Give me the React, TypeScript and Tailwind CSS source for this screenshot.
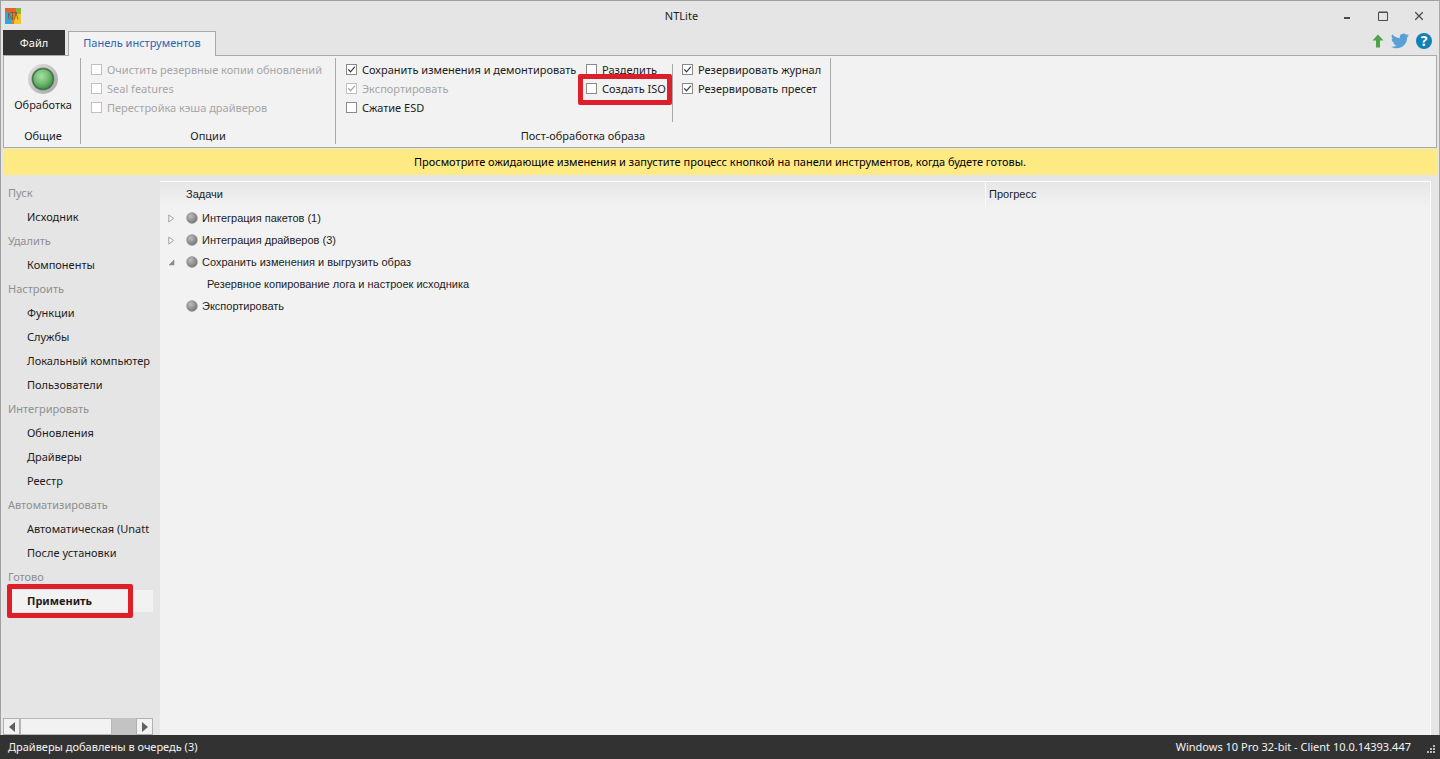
import { useState } from "react";

type CheckProps = {
  id: string;
  label: string;
  checked?: boolean;
  disabled?: boolean;
  marked?: boolean;
};

function Check({ id, label, checked = false, disabled = false, marked = false }: CheckProps) {
  return (
    <div className="relative flex h-[19px] items-center gap-[5px]">
      <span className="grid size-[11px] shrink-0">
        <input
          id={id}
          type="checkbox"
          defaultChecked={checked}
          disabled={disabled}
          className="peer col-start-1 row-start-1 size-[11px] appearance-none border border-[#8a8a8a] bg-white disabled:border-[#c0c0c0]"
        />
        <svg
          viewBox="0 0 11 11"
          fill="none"
          stroke="currentColor"
          strokeWidth="1.3"
          className="pointer-events-none invisible col-start-1 row-start-1 size-[11px] text-[#404040] peer-checked:visible peer-disabled:text-[#a5a5a5]"
        >
          <path d="M2.3 5.4 4.5 7.8 8.8 2.8" />
        </svg>
      </span>
      <label htmlFor={id} className={disabled ? "whitespace-nowrap text-[#a6a6a6]" : "whitespace-nowrap"}>
        {label}
      </label>
      {marked && (
        <span className="pointer-events-none absolute -top-[5px] -right-2 -bottom-[7px] -left-2 rounded-xs border-5 border-[#de1f2a]" />
      )}
    </div>
  );
}

function Logo() {
  return (
    <svg viewBox="0 0 16 16" className="size-4" aria-hidden="true">
      <rect width="11" height="8" fill="#e8602f" />
      <rect x="11" width="5" height="9" fill="#8fb43e" />
      <rect y="5" width="6" height="11" fill="#27a5d8" />
      <rect x="6" y="5" width="5" height="11" fill="#e9772a" />
      <path d="M10 6h6v10H9Z" fill="#f3c62b" />
      <path d="M0 4h3l3 12H0Z" fill="#2aa9e0" />
      <path d="M3.5 5v6M3.5 5l4 7M7.5 5v7M11 4.5l-1.5 7M11 4.5l2 7M5 4.5h7" stroke="#8a5a26" strokeWidth=".9" fill="none" />
    </svg>
  );
}

function Orb() {
  return (
    <svg viewBox="0 0 32 32" className="size-8" aria-hidden="true">
      <defs>
        <linearGradient id="rim" x1="0" y1="0" x2="1" y2="1">
          <stop offset="0" stopColor="#e4e4e4" />
          <stop offset=".5" stopColor="#c2c2c2" />
          <stop offset="1" stopColor="#a6a6a6" />
        </linearGradient>
        <radialGradient id="green" cx=".42" cy=".36" r=".65">
          <stop offset="0" stopColor="#a9dfa5" />
          <stop offset=".55" stopColor="#74bd76" />
          <stop offset="1" stopColor="#45904b" />
        </radialGradient>
      </defs>
      <circle cx="16" cy="16" r="15" fill="url(#rim)" />
      <circle cx="16" cy="16" r="11.5" fill="#7d8f7d" />
      <circle cx="16" cy="16" r="10.8" fill="#3a6e40" />
      <circle cx="16" cy="16" r="9.8" fill="url(#green)" />
    </svg>
  );
}

function Dot() {
  return (
    <svg viewBox="0 0 12 12" className="size-3 shrink-0" aria-hidden="true">
      <defs>
        <radialGradient id="grey" cx=".36" cy=".32" r=".75">
          <stop offset="0" stopColor="#bcbcbc" />
          <stop offset=".6" stopColor="#929292" />
          <stop offset="1" stopColor="#747474" />
        </radialGradient>
      </defs>
      <circle cx="6" cy="6" r="5.7" fill="#909090" />
      <circle cx="6" cy="6" r="5" fill="url(#grey)" />
    </svg>
  );
}

function Divider() {
  return <div className="w-px shrink-0 bg-[#a9a9a9]" />;
}

const sections = [
  { title: "Пуск", items: ["Исходник"] },
  { title: "Удалить", items: ["Компоненты"] },
  { title: "Настроить", items: ["Функции", "Службы", "Локальный компьютер", "Пользователи"] },
  { title: "Интегрировать", items: ["Обновления", "Драйверы", "Реестр"] },
  { title: "Автоматизировать", items: ["Автоматическая (Unatt", "После установки"] },
  { title: "Готово", items: ["Применить"] },
];

type Task = { name: string; state?: "closed" | "open"; child?: boolean };

const tasks: Task[] = [
  { name: "Интеграция пакетов (1)", state: "closed" },
  { name: "Интеграция драйверов (3)", state: "closed" },
  { name: "Сохранить изменения и выгрузить образ", state: "open" },
  { name: "Резервное копирование лога и настроек исходника", child: true },
  { name: "Экспортировать" },
];

function TitleBar() {
  return (
    <header className="flex h-[29px] items-center pr-[15px] pl-1">
      <Logo />
      <h1 className="grow text-center">NTLite</h1>
      <div className="flex items-center justify-end gap-[26px] text-[#4a4a4a]">
        <button aria-label="Свернуть">
          <svg viewBox="0 0 10 10" className="size-[10px]">
            <path d="M2 6h6v2H2z" fill="currentColor" />
          </svg>
        </button>
        <button aria-label="Развернуть">
          <svg viewBox="0 0 10 10" className="size-[10px]" fill="none" stroke="currentColor">
            <path d="M.5 1.5h9v8h-9zM.5 1h9" />
          </svg>
        </button>
        <button aria-label="Закрыть">
          <svg viewBox="0 0 10 10" className="size-[10px]" fill="none" stroke="currentColor" strokeWidth="1.3">
            <path d="M1.3 1.3l7.4 7.4M8.7 1.3 1.3 8.7" />
          </svg>
        </button>
      </div>
    </header>
  );
}

function TabBar() {
  return (
    <div className="flex h-[25px] justify-between">
      <div className="flex gap-[3px]">
        <button className="w-[62px] bg-[#323232] text-white">Файл</button>
        <button className="relative -mb-px mt-px w-[148px] border border-b-0 border-[#a9a9a9] bg-[#f2f2f2] pb-0.5 text-[#2b63b4]">
          Панель инструментов
        </button>
      </div>
      <div className="flex items-center gap-[7px] pr-[5px] pb-1">
        <a href="#update" aria-label="Обновить">
          <svg viewBox="0 0 12 14" className="h-[14px] w-3">
            <path d="M6 .5 11.5 6.5H8V13.5H4V6.5H.5Z" fill="#4fa348" />
          </svg>
        </a>
        <a href="#twitter" aria-label="Twitter">
          <svg viewBox="0 0 24 24" className="size-[18px]">
            <path
              fill="#5a9fd6"
              d="M23.95 4.57a10 10 0 0 1-2.82.77 4.96 4.96 0 0 0 2.16-2.72c-.95.55-2 .95-3.13 1.18a4.92 4.92 0 0 0-8.38 4.48C7.69 8.1 4.07 6.13 1.64 3.16a4.92 4.92 0 0 0 1.52 6.57 4.9 4.9 0 0 1-2.23-.61v.06a4.92 4.92 0 0 0 3.95 4.83 5 5 0 0 1-2.21.08 4.94 4.94 0 0 0 4.6 3.42A9.87 9.87 0 0 1 0 19.54a13.99 13.99 0 0 0 7.56 2.21c9.05 0 14-7.5 14-13.98 0-.21 0-.42-.02-.63a9.94 9.94 0 0 0 2.41-2.57Z"
            />
          </svg>
        </a>
        <a
          href="#help"
          aria-label="Справка"
          className="flex size-4 items-center justify-center rounded-full bg-[#1180b4] text-sm leading-none font-bold text-white"
        >
          ?
        </a>
      </div>
    </div>
  );
}

function Ribbon() {
  return (
    <section className="flex h-[93px] border border-[#a9a9a9] bg-[#f2f2f2] pt-0.5 pb-[3px]">
      <div className="flex w-[76px] flex-col items-center justify-between pl-0.5">
        <button className="flex flex-col items-center gap-0.5 pt-[5px]">
          <Orb />
          Обработка
        </button>
        <h2>Общие</h2>
      </div>
      <Divider />
      <div className="flex w-[254px] flex-col justify-between">
        <div className="pt-0.5 pl-[10px]">
          <Check id="clean" label="Очистить резервные копии обновлений" disabled />
          <Check id="seal" label="Seal features" disabled />
          <Check id="rebuild" label="Перестройка кэша драйверов" disabled />
        </div>
        <h2 className="text-center">Опции</h2>
      </div>
      <Divider />
      <div className="flex w-[494px] flex-col justify-between">
        <div className="flex pt-0.5 pl-[10px]">
          <div className="w-[240px]">
            <Check id="save" label="Сохранить изменения и демонтировать" checked />
            <Check id="export" label="Экспортировать" checked disabled />
            <Check id="esd" label="Сжатие ESD" />
          </div>
          <div className="w-[86px] pr-2">
            <Check id="split" label="Разделить" />
            <Check id="iso" label="Создать ISO" marked />
          </div>
          <div className="-mb-[5px] flex pt-1">
            <Divider />
          </div>
          <div className="pl-[9px]">
            <Check id="log" label="Резервировать журнал" checked />
            <Check id="preset" label="Резервировать пресет" checked />
          </div>
        </div>
        <h2 className="text-center">Пост-обработка образа</h2>
      </div>
      <Divider />
    </section>
  );
}

function Sidebar({ current, onSelect }: { current: string; onSelect: (name: string) => void }) {
  return (
    <aside className="flex w-[157px] shrink-0 flex-col justify-between pr-[7px]">
      <nav className="overflow-x-clip">
        {sections.map((section) => (
          <div key={section.title}>
            <h3 className="h-6 pl-[5px] leading-6 text-[#8f8f8f]">{section.title}</h3>
            {section.items.map((item) => (
              <div key={item} className="relative py-px pl-[5px]">
                <button
                  onClick={() => onSelect(item)}
                  className={
                    item === current
                      ? "block h-[22px] w-full overflow-hidden bg-[#f2f2f2] pl-[19px] text-left font-bold whitespace-nowrap"
                      : "block h-[22px] w-full overflow-hidden pl-[19px] text-left whitespace-nowrap"
                  }
                >
                  {item}
                </button>
                {item === "Применить" && (
                  <span className="pointer-events-none absolute -top-[5px] -bottom-[5px] left-1 w-[126px] rounded-xs border-5 border-[#de1f2a]" />
                )}
              </div>
            ))}
          </div>
        ))}
      </nav>
      <div className="flex h-[17px] bg-[#c3c3c3]">
        <button aria-label="Влево" className="flex w-[17px] items-center justify-center border border-[#b0b0b0] bg-[#f2f2f2]">
          <svg viewBox="0 0 6 10" className="h-[10px] w-[6px]">
            <path d="M6 0v10L0 5Z" fill="#606060" />
          </svg>
        </button>
        <div className="w-[92px] border border-[#b8b8b8] bg-[#f2f2f2]" />
        <button
          aria-label="Вправо"
          className="ml-auto flex w-[17px] items-center justify-center border border-[#b0b0b0] bg-[#f2f2f2]"
        >
          <svg viewBox="0 0 6 10" className="h-[10px] w-[6px]">
            <path d="M0 0v10l6-5Z" fill="#606060" />
          </svg>
        </button>
      </div>
    </aside>
  );
}

function TaskTable() {
  return (
    <main className="grow border-t border-r border-white bg-[#f2f2f2] font-['Liberation_Sans',sans-serif]">
      <table className="w-full table-fixed border-collapse text-left">
        <thead className="bg-linear-to-b from-[#e6e6e6] to-[#f2f2f2]">
          <tr className="h-[25px]">
            <th className="w-[65%] border-r border-[#fafafa] pb-0.5 pl-[26px] font-normal">Задачи</th>
            <th className="pb-0.5 pl-[3px] font-normal">Прогресс</th>
          </tr>
        </thead>
        <tbody>
          {tasks.map((task) => (
            <tr key={task.name} className="h-[22px]">
              <td className="py-0">
                <div className={task.child ? "pl-[47px]" : "flex items-center gap-1 pl-2"}>
                  {!task.child && (
                    <>
                      <span className="flex w-[14px]">
                        {task.state && (
                          <button aria-label={task.state === "open" ? "Скрыть" : "Показать"}>
                            <svg viewBox="0 0 7 9" className="h-[9px] w-[7px]">
                              {task.state === "open" ? (
                                <path d="M6 2v5H1Z" fill="#8a8a8a" stroke="#8a8a8a" strokeWidth=".6" />
                              ) : (
                                <path d="M.8 1v7L5.6 4.5Z" fill="#f8f8f8" stroke="#a0a0a0" />
                              )}
                            </svg>
                          </button>
                        )}
                      </span>
                      <Dot />
                    </>
                  )}
                  <span>{task.name}</span>
                </div>
              </td>
              <td />
            </tr>
          ))}
        </tbody>
      </table>
    </main>
  );
}

function StatusBar() {
  return (
    <footer className="-ml-px flex h-6 items-center bg-[#323232] pr-1 pl-2 text-[#f4f4f4]">
      <span>Драйверы добавлены в очередь (3)</span>
      <span className="ml-auto">Windows 10 Pro 32-bit - Client 10.0.14393.447</span>
      <svg viewBox="0 0 9 9" fill="#b8b8b8" className="mb-[5px] ml-4 size-[9px] self-end" aria-hidden="true">
        <path d="M6 0h2v2H6zM3 3h2v2H3zM6 3h2v2H6zM0 6h2v2H0zM3 6h2v2H3zM6 6h2v2H6z" />
      </svg>
    </footer>
  );
}

export default function App() {
  const [current, setCurrent] = useState("Применить");
  return (
    <div className="flex min-h-screen flex-col border-t border-l border-[#a0a0a0] bg-[#e5e5e5] font-['Noto_Sans',sans-serif] text-[11px] leading-4 text-[#1c1c1c]">
      <div className="flex grow flex-col border-r border-[#a9a9a9]">
        <TitleBar />
        <div className="pr-0.5 pl-0.5">
          <TabBar />
          <Ribbon />
          <p className="mt-px h-[26px] bg-[#feea82] text-center leading-[26px] text-black">
            Просмотрите ожидающие изменения и запустите процесс кнопкой на панели инструментов, когда будете готовы.
          </p>
        </div>
        <div className="flex grow pt-[6px] pr-2 pl-0.5">
          <Sidebar current={current} onSelect={setCurrent} />
          <TaskTable />
        </div>
      </div>
      <StatusBar />
    </div>
  );
}
